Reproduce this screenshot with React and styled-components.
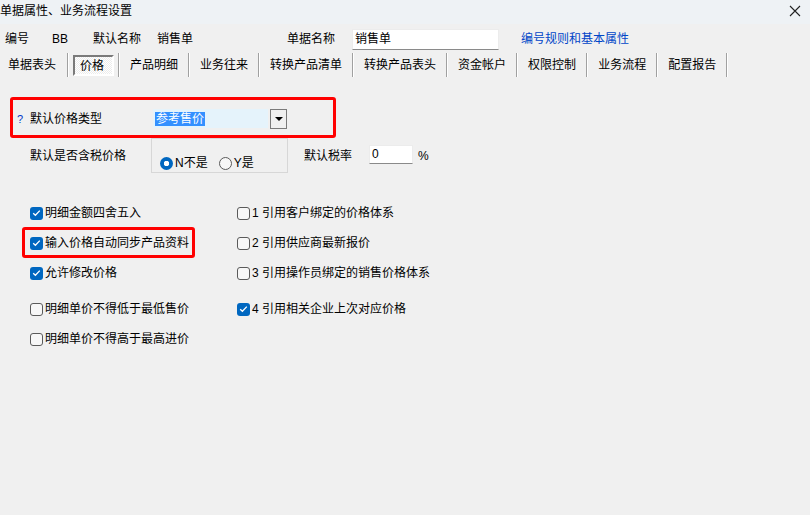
import styled, { createGlobalStyle, css } from 'styled-components'

const GlobalStyle = createGlobalStyle`
    html, body { margin: 0; padding: 0; background: #f0f0f0; }
    *, *::before, *::after { box-sizing: border-box; }
`;

const Window = styled.div`
    width: 810px;
    height: 515px;
    background: #f0f0f0;
    color: #000;
    font-family: "Liberation Sans", "Noto Sans CJK SC", sans-serif;
    font-size: 12px;
    line-height: 16px;
    overflow: hidden;
`;

const TitleBar = styled.div`
    height: 24px;
    background: #eef2f5;
    display: flex;
    align-items: center;
    justify-content: space-between;
    padding: 0 8px 2px 0;
`;

const CloseButton = styled.div`
    width: 14px;
    height: 14px;
    display: flex;
    align-items: center;
    justify-content: center;
`;

const InfoRow = styled.div`
    height: 29px;
    display: flex;
    align-items: center;
    padding: 1px 0 0 5px;
`;

const Field = styled.span`
    width: ${p => p.w}px;
    flex: none;
    color: ${p => p.link ? '#0046c8' : '#000'};
    white-space: nowrap;
`;

const TextBox = styled.div`
    width: ${p => p.w}px;
    height: ${p => p.h || 21}px;
    flex: none;
    background: #fff;
    border: 1px solid #ececec;
    border-bottom: 1px solid #8a8a8a;
    padding: 1px 2px;
    line-height: 16px;
    margin-right: ${p => p.mr || 0}px;
`;

const TabRow = styled.div`
    height: 24px;
    display: flex;
    align-items: stretch;
`;

const Tab = styled.div`
    display: flex;
    align-items: center;
    padding: 0 10px;
    white-space: nowrap;
    &:first-child { padding-left: 8px; padding-right: 11px; }
    ${p => p.active && css`
        margin: 2px 4px 1px;
        padding: 0 8px 0 5px;
        border: 2px solid;
        border-color: #7a7a7a #fff #fff #7a7a7a;
        background: repeating-conic-gradient(#fff 0 25%, #ececec 0 50%) 0 0 / 2px 2px;
    `}
`;

const TabSep = styled.div`
    width: 2px;
    border-left: 1px solid #a0a0a0;
    border-right: 1px solid #fff;
`;

const Body = styled.div`
    padding: 20px 0 0 10px;
`;

const Highlight = styled.div`
    width: 326px;
    height: 41px;
    border: 3px solid #ff0000;
    border-radius: 3px;
    display: flex;
    align-items: center;
    padding: 2px 0 0 4px;
`;

const Hint = styled.span`
    width: 13px;
    color: #0038c8;
    font-size: 11px;
`;

const Label = styled.span`
    width: ${p => p.w}px;
    flex: none;
    white-space: nowrap;
`;

const Combo = styled.div`
    display: flex;
    align-items: center;
    gap: 2px;
`;

const ComboText = styled.div`
    width: 115px;
    height: 19px;
    background: #e5f3fb;
    padding: 2px 0 0 2px;
`;

const Selected = styled.span`
    background: #3390ff;
    color: #fff;
    padding: 0 1px;
    line-height: 14px;
    display: inline-block;
`;

const DropButton = styled.div`
    width: 17px;
    height: 20px;
    border: 1px solid #7a7a7a;
    background: #f0f0f0;
    display: flex;
    align-items: center;
    justify-content: center;
    &::after {
        content: '';
        border-left: 4px solid transparent;
        border-right: 4px solid transparent;
        border-top: 4px solid #000;
    }
`;

const TaxRow = styled.div`
    display: flex;
    align-items: center;
    height: 35px;
    padding-left: 20px;
`;

const GroupBox = styled.div`
    width: 137px;
    height: 35px;
    flex: none;
    border: 1px solid #d7d7d7;
    display: flex;
    align-items: flex-end;
    gap: 11px;
    padding: 0 0 1px 8px;
    margin-right: 16px;
`;

const Radio = styled.label`
    display: flex;
    align-items: center;
    gap: 2px;
    &::before {
        content: '';
        width: 13px;
        height: 13px;
        border-radius: 50%;
        ${p => p.checked ? css`
            background: radial-gradient(circle, #fff 0 2.5px, #0067c0 3px);
        ` : css`
            border: 1px solid #5a5a5a;
            background: #f7f7f7;
        `}
    }
`;

const RateBox = styled(TextBox)`
    height: 19px;
    margin-top: -2px;
    padding-top: 0;
`;

const CheckGrid = styled.div`
    display: grid;
    grid-template-columns: 207px auto;
    grid-template-rows: 30px 30px 30px 36px 30px;
    align-items: end;
    margin-top: 25px;
    padding-left: 20px;
`;

const CheckItem = styled.label`
    position: relative;
    display: flex;
    align-items: center;
    gap: 2px;
    height: 30px;
    white-space: nowrap;
    ${p => p.marked && css`
        &::after {
            content: '';
            position: absolute;
            left: -8px;
            top: -1px;
            width: 173px;
            height: 31px;
            border: 3px solid #ff0000;
            border-radius: 3px;
        }
    `}
`;

const Box = styled.span`
    width: 13px;
    height: 13px;
    flex: none;
    border-radius: 3px;
    display: flex;
    align-items: center;
    justify-content: center;
    ${p => p.checked ? css`
        background: #0067c0;
    ` : css`
        border: 1px solid #5a5a5a;
        background: #f7f7f7;
    `}
`;

const Check = () => (
    <svg width="9" height="8" viewBox="0 0 9 8">
        <path d="M1.2 4.2 L3.4 6.3 L7.8 1.6" fill="none" stroke="#fff" strokeWidth="1.3" />
    </svg>
);

const CheckOption = ({ checked, marked, children }) => (
    <CheckItem marked={marked}>
        <Box checked={checked}>{checked && <Check />}</Box>
        {children}
    </CheckItem>
);

const tabs = ['单据表头', '价格', '产品明细', '业务往来', '转换产品清单', '转换产品表头', '资金帐户', '权限控制', '业务流程', '配置报告'];

const App = () => (
    <Window>
        <GlobalStyle />
        <TitleBar>
            <span>单据属性、业务流程设置</span>
            <CloseButton>
                <svg width="12" height="12" viewBox="0 0 12 12">
                    <path d="M1 1 L11 11 M11 1 L1 11" stroke="#222" strokeWidth="1.1" />
                </svg>
            </CloseButton>
        </TitleBar>

        <InfoRow>
            <Field w={47}>编号</Field>
            <Field w={41}>BB</Field>
            <Field w={64}>默认名称</Field>
            <Field w={130}>销售单</Field>
            <Field w={65}>单据名称</Field>
            <TextBox w={147} mr={22}>销售单</TextBox>
            <Field w={120} link>编号规则和基本属性</Field>
        </InfoRow>

        <TabRow>
            {tabs.map(t => [
                <Tab key={t} active={t === '价格'}>{t}</Tab>,
                <TabSep key={t + '-sep'} />
            ])}
        </TabRow>

        <Body>
            <Highlight>
                <Hint>?</Hint>
                <Label w={123}>默认价格类型</Label>
                <Combo>
                    <ComboText><Selected>参考售价</Selected></ComboText>
                    <DropButton />
                </Combo>
            </Highlight>

            <TaxRow>
                <Label w={121}>默认是否含税价格</Label>
                <GroupBox>
                    <Radio checked>N不是</Radio>
                    <Radio>Y是</Radio>
                </GroupBox>
                <Label w={65}>默认税率</Label>
                <RateBox w={44} mr={5}>0</RateBox>
                <span>%</span>
            </TaxRow>

            <CheckGrid>
                <CheckOption checked>明细金额四舍五入</CheckOption>
                <CheckOption>1 引用客户绑定的价格体系</CheckOption>
                <CheckOption checked marked>输入价格自动同步产品资料</CheckOption>
                <CheckOption>2 引用供应商最新报价</CheckOption>
                <CheckOption checked>允许修改价格</CheckOption>
                <CheckOption>3 引用操作员绑定的销售价格体系</CheckOption>
                <CheckOption>明细单价不得低于最低售价</CheckOption>
                <CheckOption checked>4 引用相关企业上次对应价格</CheckOption>
                <CheckOption>明细单价不得高于最高进价</CheckOption>
            </CheckGrid>
        </Body>
    </Window>
);

export default App;
